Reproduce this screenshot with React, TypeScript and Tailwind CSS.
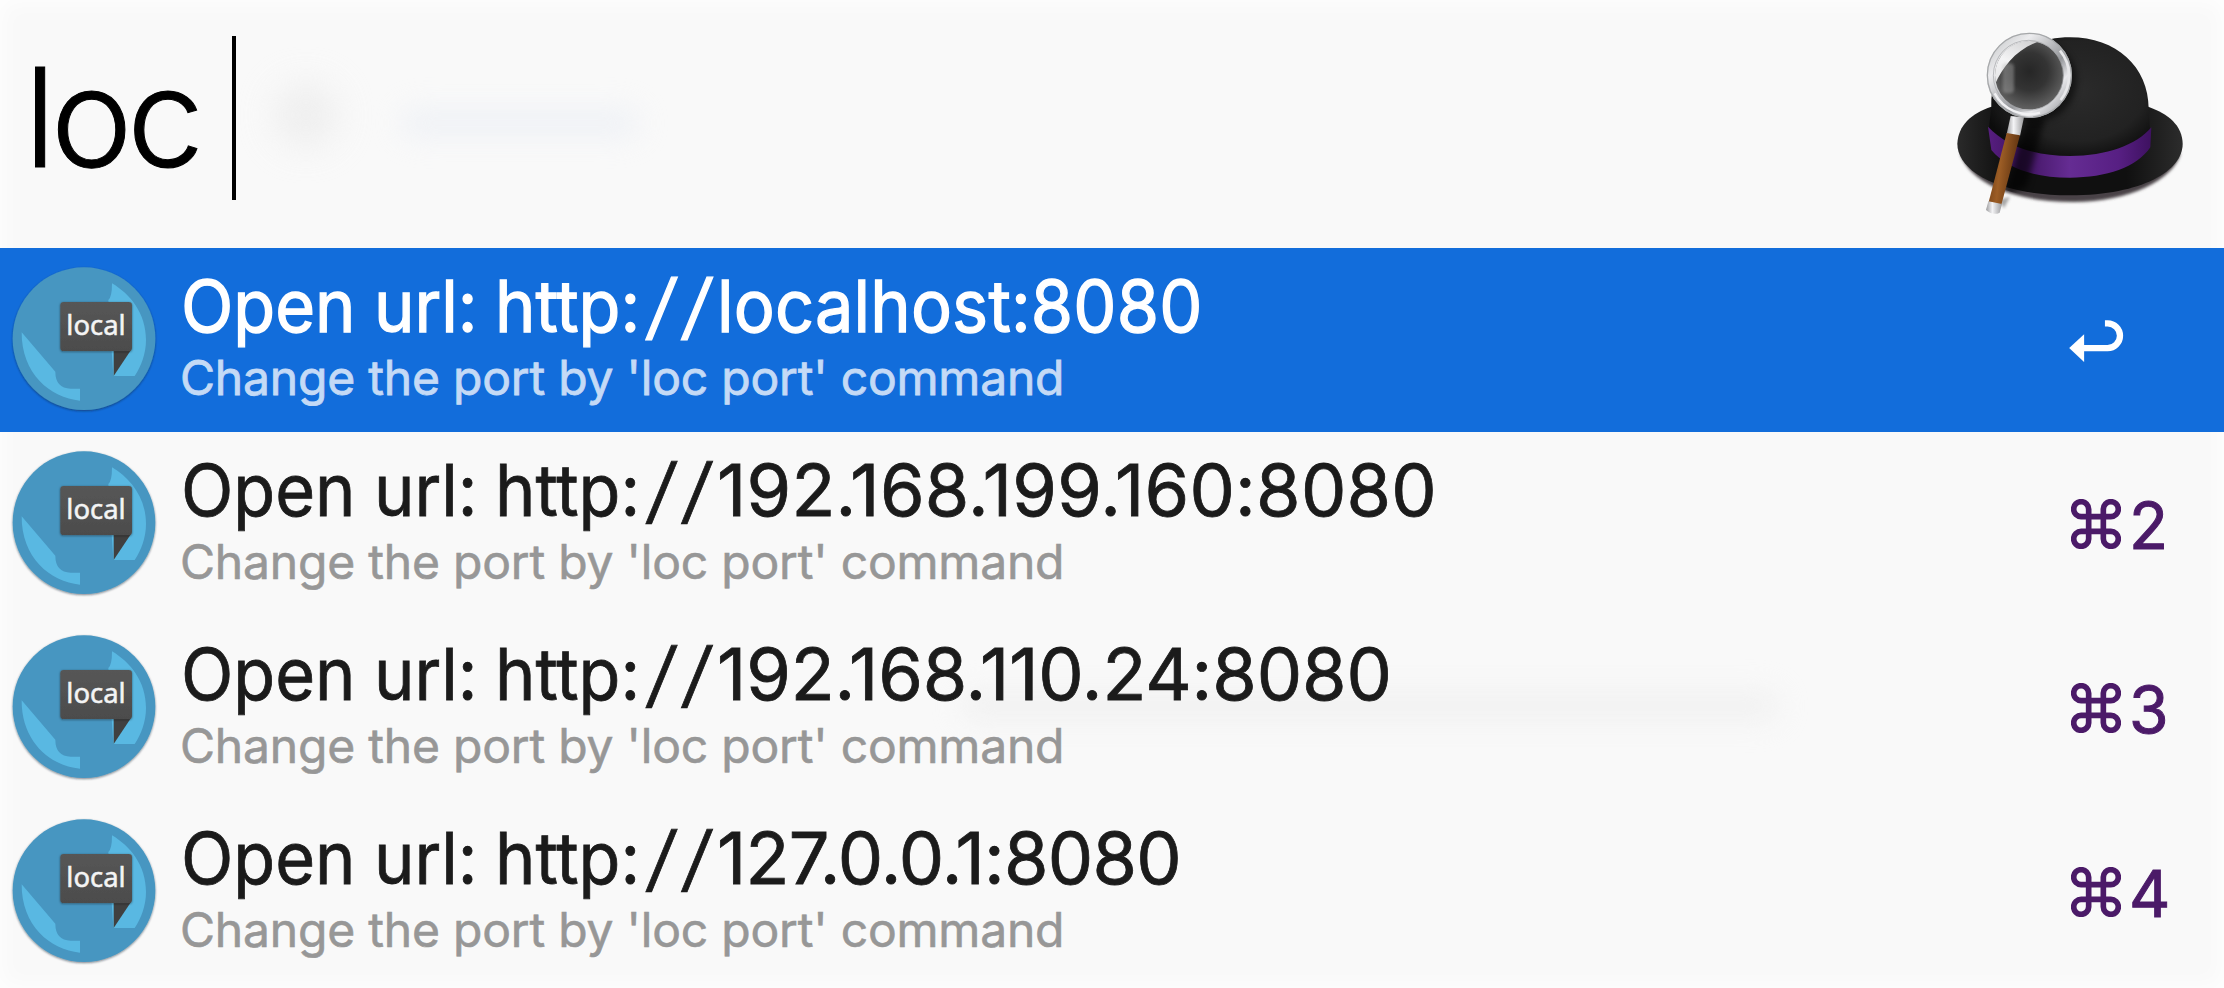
import React from "react";

type Result = { address: string; shortcut: string | null; spacing: string };

const results: Result[] = [
  { address: "localhost:8080", shortcut: null, spacing: "origin-left scale-x-95 tracking-[0.2px]" },
  { address: "192.168.199.160:8080", shortcut: "2", spacing: "tracking-[0.25px]" },
  { address: "192.168.110.24:8080", shortcut: "3", spacing: "tracking-[-0.1px]" },
  { address: "127.0.0.1:8080", shortcut: "4", spacing: "tracking-[-0.75px]" },
];

function HatLogo() {
  return (
    <svg viewBox="0 0 840 690" className="h-[230px] w-[280px] shrink-0" aria-hidden="true">
      <defs>
        <radialGradient id="crown" cx="0.55" cy="0.45" r="0.6">
          <stop offset="0" stopColor="#2b2b2b" />
          <stop offset="0.7" stopColor="#222222" />
          <stop offset="1" stopColor="#0c0c0c" />
        </radialGradient>
        <linearGradient id="brim" x1="0" x2="1" y1="0" y2="0">
          <stop offset="0" stopColor="#2a2a2a" />
          <stop offset="0.2" stopColor="#101010" />
          <stop offset="0.75" stopColor="#101010" />
          <stop offset="1" stopColor="#2c2c2c" />
        </linearGradient>
        <linearGradient id="band" x1="0" x2="1" y1="0" y2="0">
          <stop offset="0" stopColor="#571e80" />
          <stop offset="0.2" stopColor="#3f135f" />
          <stop offset="0.5" stopColor="#652c93" />
          <stop offset="0.8" stopColor="#571f83" />
          <stop offset="1" stopColor="#3e1160" />
        </linearGradient>
        <radialGradient id="lens" cx="0.5" cy="0.45" r="0.55">
          <stop offset="0" stopColor="#262626" />
          <stop offset="0.45" stopColor="#343434" />
          <stop offset="1" stopColor="#6b6b6b" />
        </radialGradient>
        <linearGradient id="glare" x1="0.7" x2="0.2" y1="0" y2="1">
          <stop offset="0" stopColor="#c9c9cb" />
          <stop offset="0.5" stopColor="#f4f4f5" />
          <stop offset="1" stopColor="#dededf" />
        </linearGradient>
        <linearGradient id="ring" x1="0" x2="1" y1="0" y2="1">
          <stop offset="0" stopColor="#c3c5c7" />
          <stop offset="0.25" stopColor="#ececee" />
          <stop offset="0.6" stopColor="#94969a" />
          <stop offset="0.75" stopColor="#e9e9ec" />
          <stop offset="1" stopColor="#8f9195" />
        </linearGradient>
        <linearGradient id="wood" x1="0" x2="1" y1="0" y2="0.25">
          <stop offset="0" stopColor="#6b3a12" />
          <stop offset="0.45" stopColor="#9c5d25" />
          <stop offset="1" stopColor="#5e3210" />
        </linearGradient>
        <linearGradient id="metal" x1="0" x2="1" y1="0" y2="0">
          <stop offset="0" stopColor="#9b9b9d" />
          <stop offset="0.4" stopColor="#f4f4f6" />
          <stop offset="1" stopColor="#9c9c9e" />
        </linearGradient>
        <filter id="soft4"><feGaussianBlur stdDeviation="4" /></filter>
        <filter id="soft10"><feGaussianBlur stdDeviation="10" /></filter>
        <clipPath id="lensClip"><circle cx="298" cy="196" r="103" /></clipPath>
        <clipPath id="hatClip">
          <path d="M82 402 C86 345 130 310 184 290 L190 220 C230 120 320 82 420 82 C560 82 650 170 655 290 C710 312 755 350 758 402 C756 500 600 570 420 570 C240 570 86 500 82 402 Z" />
        </clipPath>
      </defs>
      <path d="M90 430 C120 520 250 576 430 576 C600 576 730 510 752 430 Z" fill="#4a4346" filter="url(#soft4)" />
      <path d="M82 402 C84 345 125 310 184 290 L655 290 C715 312 757 345 758 402 C758 480 640 556 420 556 C200 556 82 480 82 402 Z" fill="url(#brim)" />
      <path d="M184 290 C180 160 290 82 420 82 C560 82 658 172 656 300 L660 360 C620 410 530 440 420 440 C310 440 220 410 176 360 Z" fill="url(#crown)" />
      <path d="M174 350 C230 408 310 438 420 438 C530 438 620 405 664 352 L661 412 C620 472 530 503 420 503 C310 503 230 474 184 420 Z" fill="url(#band)" />
      <g clipPath="url(#hatClip)">
        <path d="M290 325 L345 325 L290 530 L220 565 Z" fill="#000000" opacity="0.6" filter="url(#soft10)" />
        <circle cx="318" cy="212" r="122" fill="#000000" opacity="0.5" filter="url(#soft10)" />
      </g>
      <path d="M206 570 L222 595 L240 560 Z" fill="#555555" opacity="0.5" filter="url(#soft4)" />
      <path d="M242 318 L282 322 L270 378 L230 372 Z" fill="url(#metal)" />
      <path d="M230 369 L270 376 L214 584 L176 576 Z" fill="url(#wood)" />
      <path d="M175 574 L216 582 L209 608 Q190 618 168 600 Z" fill="url(#metal)" />
      <circle cx="298" cy="196" r="115" fill="url(#lens)" />
      <g clipPath="url(#lensClip)">
        <path d="M180 260 C205 190 250 110 350 88 L300 60 L160 110 Z" fill="url(#glare)" />
        <rect x="218" y="160" width="34" height="90" rx="12" fill="#b5b5b5" opacity="0.4" filter="url(#soft4)" />
      </g>
      <circle cx="298" cy="196" r="115" fill="none" stroke="url(#ring)" strokeWidth="25" />
      <circle cx="298" cy="196" r="126" fill="none" stroke="#a6a8aa" strokeWidth="4" />
      <circle cx="295" cy="196" r="105" fill="none" stroke="#a5a7aa" strokeWidth="3" opacity="0.7" />
      <path d="M390 122 A118 118 0 0 1 392 270" fill="none" stroke="#e8e8ea" strokeWidth="8" />
      <path d="M194 250 A117 117 0 0 0 330 308" fill="none" stroke="#f1f1f3" strokeWidth="7" />
    </svg>
  );
}

function LocalIcon() {
  return (
    <svg viewBox="0 0 480 480" className="h-[160px] w-[160px] shrink-0" aria-hidden="true">
      <defs>
        <filter id="discShadow" x="-10%" y="-10%" width="120%" height="120%">
          <feDropShadow dx="0" dy="3" stdDeviation="2.5" floodColor="#123" floodOpacity="0.55" />
        </filter>
        <filter id="bubbleShadow" x="-10%" y="-10%" width="120%" height="125%">
          <feDropShadow dx="0" dy="2" stdDeviation="3" floodColor="#111" floodOpacity="0.5" />
        </filter>
        <linearGradient id="bubble" x1="0" x2="0" y1="0" y2="1">
          <stop offset="0" stopColor="#565656" />
          <stop offset="1" stopColor="#4c4c4c" />
        </linearGradient>
      </defs>
      <circle cx="252" cy="236" r="214" fill="#4796c1" filter="url(#discShadow)" />
      <path d="M336 70 C390 102 438 160 438 240 C438 280 424 318 404 348 L340 348 L325 120 Q336 112 336 70 Z" fill="#59b8e2" />
      <path d="M65 217 L166 335 Q166 384 212 386 L240 386 L240 422 C150 414 64 340 65 217 Z" fill="#59b8e2" />
      <path d="M341 270 L393 270 L341 348 Z" fill="#404040" />
      <rect x="181" y="126" width="215" height="147" rx="10" fill="url(#bubble)" filter="url(#bubbleShadow)" />
      <text x="199" y="224" fontFamily="Noto Sans, sans-serif" fontSize="82" textLength="178" lengthAdjust="spacingAndGlyphs" fill="#f4f4f4" stroke="#f4f4f4" strokeWidth="1.5">local</text>
    </svg>
  );
}

function ReturnIcon() {
  return (
    <svg viewBox="0 0 165 130" className="h-[43px] w-[55px]" fill="none" aria-hidden="true">
      <path d="M108 10 H116 A37.500 37.500 0 0 1 116 85 H40" stroke="#ffffff" strokeWidth="19" />
      <path d="M0 85 L45 43 V127 Z" fill="#ffffff" />
    </svg>
  );
}

function CommandIcon() {
  return (
    <svg viewBox="0 0 150 150" className="h-[50px] w-[50px]" fill="none" stroke="#4b1a68" strokeWidth="17" aria-hidden="true">
      <path d="M53 31 V119 A22.500 22.500 0 1 1 31 97 H119 A22.500 22.500 0 1 1 97 119 V31 A22.500 22.500 0 1 1 119 53 H31 A22.500 22.500 0 1 1 53 31 Z" />
    </svg>
  );
}

function Row({ result }: { result: Result }) {
  const selected = result.shortcut === null;
  return (
    <li className={selected ? "flex h-[184px] items-start bg-[#126ddb]" : "flex h-[184px] items-start"}>
      <div className="-mt-[1px] pt-[13px]">
        <LocalIcon />
      </div>
      <div className="flex flex-1 flex-col pl-[21px] pt-[16px] whitespace-nowrap">
        <div className={`flex whitespace-pre text-[72px] leading-[84px] ${selected ? "text-white [-webkit-text-stroke:1.3px_#ffffff]" : "text-[#1b1b1b] [-webkit-text-stroke:0.8px_#1b1b1b]"}`}>
          <span className="w-[193px]"><span className="inline-block origin-left scale-x-95">Open </span></span>
          <span className="w-[121px]"><span className="inline-block origin-left scale-x-95">url: </span></span>
          <span className="w-[148px]"><span className="inline-block origin-left scale-x-95">http:</span></span>
          <span className="w-[74px]"><span className="inline-block origin-bottom-left -skew-x-8 tracking-[9.5px]">//</span></span>
          <span className={`inline-block ${result.spacing}`}>{result.address}</span>
        </div>
        <span className={`-ml-[1px] text-[48px] leading-[60px] tracking-[-0.2px] ${selected ? "text-[#c4daf6] [-webkit-text-stroke:0.8px_#c4daf6]" : "text-[#979797] [-webkit-text-stroke:0.6px_#979797]"}`}>
          Change the port by 'loc port' command
        </span>
      </div>
      <div className="flex w-[154px] items-start">
        {selected ? (
          <div className="-ml-[1px] pt-[72px]"><ReturnIcon /></div>
        ) : (
          <div className="flex items-start pl-[1px] pt-[67px] text-[#4b1a68]">
            <CommandIcon />
            <span className="-mt-[13px] pl-[8px] text-[64px] leading-[80px] [-webkit-text-stroke:1px_#4b1a68]">{result.shortcut}</span>
          </div>
        )}
      </div>
    </li>
  );
}

export default function App() {
  return (
    <main className="relative flex h-[988px] w-[2224px] flex-col overflow-hidden bg-[#f9f9f9] font-['Inter',sans-serif] shadow-[inset_0_0_24px_#ffffff]">
      <div className="absolute left-[275px] top-[84px] h-[62px] w-[62px] rounded-full bg-[#e9e9e9] opacity-70 blur-[18px]" />
      <div className="absolute left-[400px] top-[108px] h-[30px] w-[240px] rounded-full bg-[#e9edf4] opacity-60 blur-[14px]" />
      <div className="absolute left-[960px] top-[690px] h-[32px] w-[820px] rounded-full bg-[#eaeaea] opacity-50 blur-[14px]" />
      <header className="relative flex h-[248px] items-start">
        <div className="flex flex-1 items-start">
          <span className="w-[232px] pl-[24px] pt-[37px] text-[138px] font-light leading-[160px] tracking-[-5.5px] [-webkit-text-stroke:1px_#000000]">loc</span>
          <span className="mt-[36px] h-[164px] w-[4px] bg-black" />
        </div>
        <div className="pr-[14px] pt-[10px]">
          <HatLogo />
        </div>
      </header>
      <ul className="relative flex flex-col">
        {results.map((r) => (
          <Row key={r.address} result={r} />
        ))}
      </ul>
    </main>
  );
}
